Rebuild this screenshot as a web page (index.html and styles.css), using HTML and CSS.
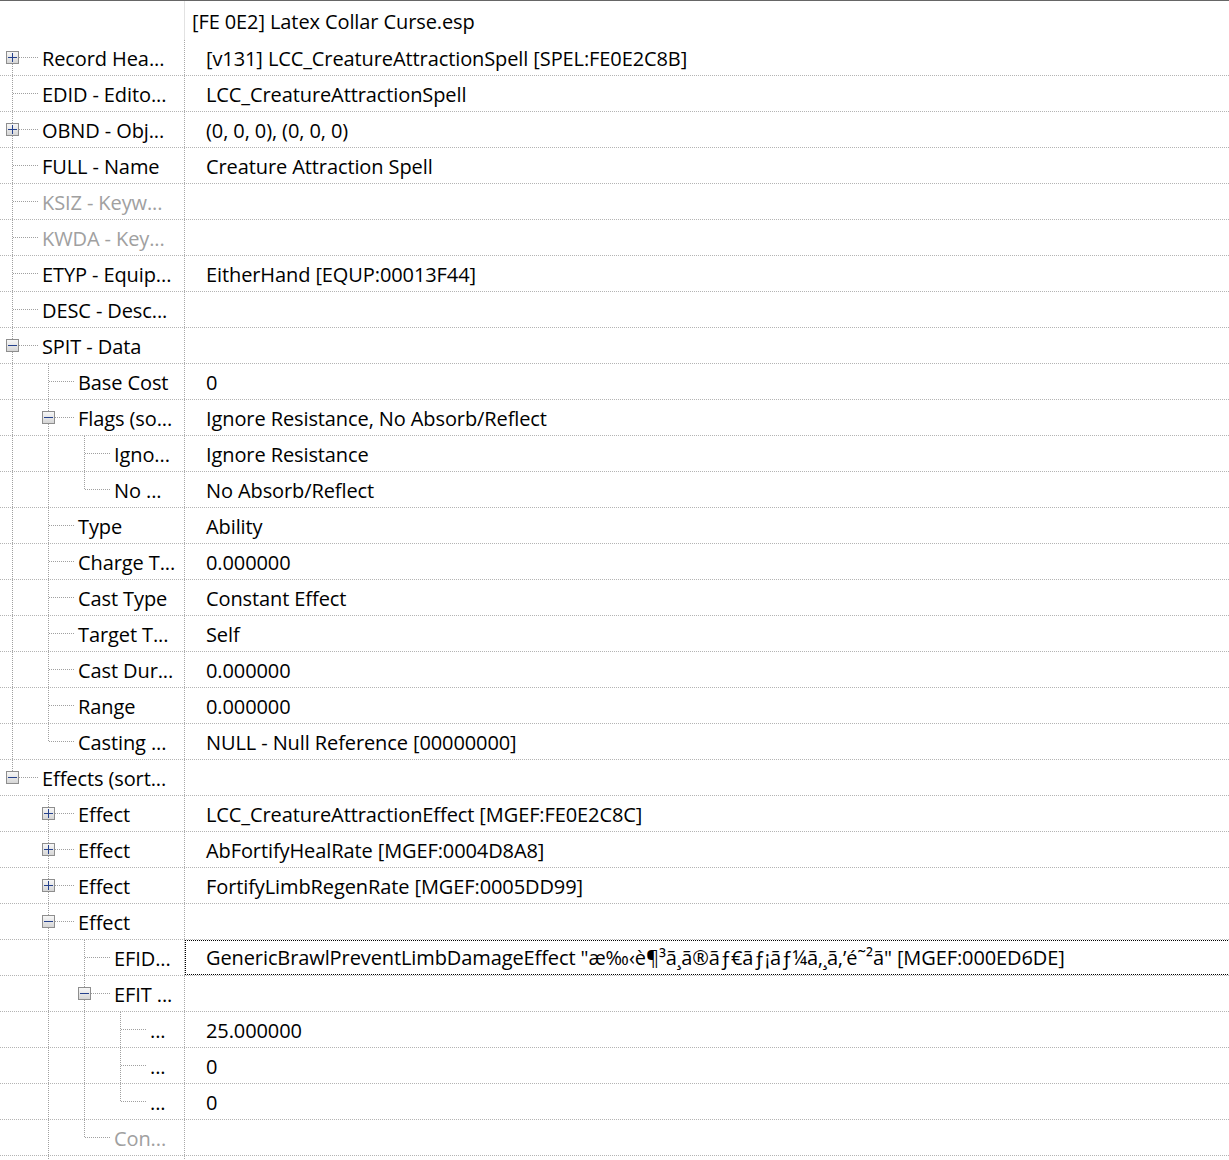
FILE: index.html
```html
<!DOCTYPE html>
<html lang="en">
<head>
<meta charset="utf-8">
<title>Latex Collar Curse.esp</title>
<link rel="stylesheet" href="styles.css">
</head>
<body>
<div class="tree">
  <div class="hdr">
    <div class="hdr-name"></div>
    <div class="hdr-val">[FE 0E2] Latex Collar Curse.esp</div>
  </div>

  <div class="row">
    <div class="name"><span class="g c first"><span class="exp plus"></span></span><span class="label">Record Hea...</span></div>
    <div class="val">[v131] LCC_CreatureAttractionSpell [SPEL:FE0E2C8B]</div>
  </div>
  <div class="row">
    <div class="name"><span class="g c tee"></span><span class="label">EDID - Edito...</span></div>
    <div class="val">LCC_CreatureAttractionSpell</div>
  </div>
  <div class="row">
    <div class="name"><span class="g c tee"><span class="exp plus"></span></span><span class="label">OBND - Obj...</span></div>
    <div class="val">(0, 0, 0), (0, 0, 0)</div>
  </div>
  <div class="row">
    <div class="name"><span class="g c tee"></span><span class="label">FULL - Name</span></div>
    <div class="val">Creature Attraction Spell</div>
  </div>
  <div class="row">
    <div class="name"><span class="g c tee"></span><span class="label dim">KSIZ - Keyw...</span></div>
    <div class="val"></div>
  </div>
  <div class="row">
    <div class="name"><span class="g c tee"></span><span class="label dim">KWDA - Key...</span></div>
    <div class="val"></div>
  </div>
  <div class="row">
    <div class="name"><span class="g c tee"></span><span class="label">ETYP - Equip...</span></div>
    <div class="val">EitherHand [EQUP:00013F44]</div>
  </div>
  <div class="row">
    <div class="name"><span class="g c tee"></span><span class="label">DESC - Desc...</span></div>
    <div class="val"></div>
  </div>
  <div class="row">
    <div class="name"><span class="g c tee"><span class="exp minus"></span></span><span class="label">SPIT - Data</span></div>
    <div class="val"></div>
  </div>

  <div class="row">
    <div class="name"><span class="g v"></span><span class="g c tee"></span><span class="label">Base Cost</span></div>
    <div class="val">0</div>
  </div>
  <div class="row">
    <div class="name"><span class="g v"></span><span class="g c tee"><span class="exp minus"></span></span><span class="label">Flags (so...</span></div>
    <div class="val">Ignore Resistance, No Absorb/Reflect</div>
  </div>
  <div class="row">
    <div class="name"><span class="g v"></span><span class="g v"></span><span class="g c tee"></span><span class="label">Igno...</span></div>
    <div class="val">Ignore Resistance</div>
  </div>
  <div class="row">
    <div class="name"><span class="g v"></span><span class="g v"></span><span class="g c end"></span><span class="label">No ...</span></div>
    <div class="val">No Absorb/Reflect</div>
  </div>
  <div class="row">
    <div class="name"><span class="g v"></span><span class="g c tee"></span><span class="label">Type</span></div>
    <div class="val">Ability</div>
  </div>
  <div class="row">
    <div class="name"><span class="g v"></span><span class="g c tee"></span><span class="label">Charge T...</span></div>
    <div class="val">0.000000</div>
  </div>
  <div class="row">
    <div class="name"><span class="g v"></span><span class="g c tee"></span><span class="label">Cast Type</span></div>
    <div class="val">Constant Effect</div>
  </div>
  <div class="row">
    <div class="name"><span class="g v"></span><span class="g c tee"></span><span class="label">Target T...</span></div>
    <div class="val">Self</div>
  </div>
  <div class="row">
    <div class="name"><span class="g v"></span><span class="g c tee"></span><span class="label">Cast Dur...</span></div>
    <div class="val">0.000000</div>
  </div>
  <div class="row">
    <div class="name"><span class="g v"></span><span class="g c tee"></span><span class="label">Range</span></div>
    <div class="val">0.000000</div>
  </div>
  <div class="row">
    <div class="name"><span class="g v"></span><span class="g c end"></span><span class="label">Casting ...</span></div>
    <div class="val">NULL - Null Reference [00000000]</div>
  </div>

  <div class="row">
    <div class="name"><span class="g c end"><span class="exp minus"></span></span><span class="label">Effects (sort...</span></div>
    <div class="val"></div>
  </div>
  <div class="row">
    <div class="name"><span class="g"></span><span class="g c tee"><span class="exp plus"></span></span><span class="label">Effect</span></div>
    <div class="val">LCC_CreatureAttractionEffect [MGEF:FE0E2C8C]</div>
  </div>
  <div class="row">
    <div class="name"><span class="g"></span><span class="g c tee"><span class="exp plus"></span></span><span class="label">Effect</span></div>
    <div class="val">AbFortifyHealRate [MGEF:0004D8A8]</div>
  </div>
  <div class="row">
    <div class="name"><span class="g"></span><span class="g c tee"><span class="exp plus"></span></span><span class="label">Effect</span></div>
    <div class="val">FortifyLimbRegenRate [MGEF:0005DD99]</div>
  </div>
  <div class="row">
    <div class="name"><span class="g"></span><span class="g c tee"><span class="exp minus"></span></span><span class="label">Effect</span></div>
    <div class="val"></div>
  </div>
  <div class="row">
    <div class="name"><span class="g"></span><span class="g v"></span><span class="g c tee"></span><span class="label">EFID...</span></div>
    <div class="val focus">GenericBrawlPreventLimbDamageEffect "æ‰‹è¶³ã¸ã®ãƒ€ãƒ¡ãƒ¼ã‚¸ã‚’é˜²ã" [MGEF:000ED6DE]</div>
  </div>
  <div class="row">
    <div class="name"><span class="g"></span><span class="g v"></span><span class="g c tee"><span class="exp minus"></span></span><span class="label">EFIT ...</span></div>
    <div class="val"></div>
  </div>
  <div class="row">
    <div class="name"><span class="g"></span><span class="g v"></span><span class="g v"></span><span class="g c tee"></span><span class="label">...</span></div>
    <div class="val">25.000000</div>
  </div>
  <div class="row">
    <div class="name"><span class="g"></span><span class="g v"></span><span class="g v"></span><span class="g c tee"></span><span class="label">...</span></div>
    <div class="val">0</div>
  </div>
  <div class="row">
    <div class="name"><span class="g"></span><span class="g v"></span><span class="g v"></span><span class="g c end"></span><span class="label">...</span></div>
    <div class="val">0</div>
  </div>
  <div class="row">
    <div class="name"><span class="g"></span><span class="g v"></span><span class="g c end"></span><span class="label dim">Con...</span></div>
    <div class="val"></div>
  </div>
  <!-- the next sibling starts just below the visible area; only its guide shows -->
  <div class="row">
    <div class="name"><span class="g"></span><span class="g v"></span></div>
    <div class="val"></div>
  </div>
</div>
</body>
</html>
```

FILE: styles.css
```css
html, body {
  margin: 0;
  padding: 0;
  background: #ffffff;
  overflow: hidden;
}

body {
  font-family: "Open Sans", "Noto Sans", sans-serif;
  font-size: 20px;
  letter-spacing: -0.1px;
  color: #000000;
}

/* whole record view; wider than the window so the focus box runs off the right edge */
.tree {
  width: 1240px;
  border-top: 1px solid #666666;
}

.hdr {
  display: flex;
  height: 39px;
}

.hdr-name {
  flex: none;
  width: 184px;
  border-right: 1px solid #e2e2e2;
}

.hdr-val {
  padding-left: 7px;
  padding-top: 1px;
  line-height: 40px;
  white-space: nowrap;
}

/* each record row: 35px of content plus a dotted separator on its last pixel */
.row {
  display: flex;
  height: 36px;
  background: repeating-linear-gradient(to right, #b4b4b4 0 1px, transparent 1px 2px) 0 100% / 100% 1px no-repeat;
}

.name {
  flex: none;
  width: 185px;
  display: flex;
  overflow: hidden;
  background: repeating-linear-gradient(to bottom, #a8a8a8 0 1px, transparent 1px 2px) 100% 0 / 1px 100% no-repeat;
}

/* indent guides, 36px per level; the connector cell reaches 2px further */
.g {
  flex: none;
  width: 36px;
  height: 36px;
  position: relative;
}

.g.c {
  width: 38px;
}

.g.v {
  background: repeating-linear-gradient(to bottom, #a0a0a0 0 1px, transparent 1px 2px) 12px 0 / 1px 36px no-repeat;
}

.g.tee {
  background:
    repeating-linear-gradient(to right, #a0a0a0 0 1px, transparent 1px 2px) 13px 17px / 25px 1px no-repeat,
    repeating-linear-gradient(to bottom, #a0a0a0 0 1px, transparent 1px 2px) 12px 0 / 1px 36px no-repeat;
}

.g.end {
  background:
    repeating-linear-gradient(to right, #a0a0a0 0 1px, transparent 1px 2px) 13px 17px / 25px 1px no-repeat,
    repeating-linear-gradient(to bottom, #a0a0a0 0 1px, transparent 1px 2px) 12px 0 / 1px 18px no-repeat;
}

.g.first {
  background:
    repeating-linear-gradient(to right, #a0a0a0 0 1px, transparent 1px 2px) 13px 17px / 25px 1px no-repeat,
    repeating-linear-gradient(to bottom, #a0a0a0 0 1px, transparent 1px 2px) 12px 18px / 1px 18px no-repeat;
}

/* expand / collapse button sitting on the guide line */
.exp {
  position: absolute;
  left: 6px;
  top: 11px;
  width: 13px;
  height: 13px;
  box-sizing: border-box;
  border: 1px solid #8e8e8e;
  background: linear-gradient(to bottom, #f7f7f7, #d6d6d6);
}

.exp::before {
  content: "";
  position: absolute;
  left: 1px;
  top: 5px;
  width: 9px;
  height: 1px;
  background: #25418c;
}

.exp.plus::after {
  content: "";
  position: absolute;
  left: 5px;
  top: 1px;
  width: 1px;
  height: 9px;
  background: #25418c;
}

.label {
  padding-left: 4px;
  padding-top: 1px;
  line-height: 35px;
  white-space: nowrap;
}

.label.dim {
  color: #a0a0a0;
}

.val {
  flex: 1;
  padding-left: 21px;
  padding-top: 1px;
  line-height: 35px;
  white-space: nowrap;
}

.val.focus {
  align-self: flex-start;
  height: 35px;
  box-sizing: border-box;
  padding-left: 20px;
  padding-top: 1px;
  line-height: 32px;
  border: 1px dotted #000000;
}
```
